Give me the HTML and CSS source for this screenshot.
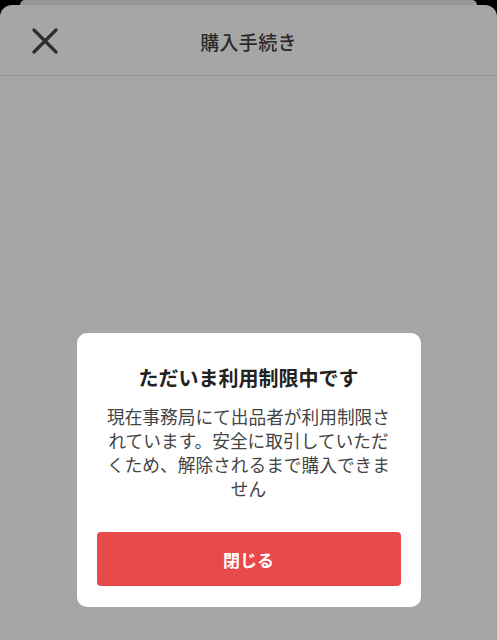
FILE: index.html
```html
<!DOCTYPE html>
<html lang="ja">
<head>
<meta charset="utf-8">
<link rel="stylesheet" href="styles.css">
</head>
<body>
<div class="back"></div>
<div class="sheet">
  <header class="header">
    <button class="close" aria-label="閉じる">
      <svg width="26" height="26" viewBox="0 0 26 26"><path d="M2 2 L24 24 M24 2 L2 24" stroke="#2e2e2e" stroke-width="3.2" stroke-linecap="round" fill="none"/></svg>
    </button>
    <h1 class="title">購入手続き</h1>
  </header>
  <main class="content">
    <div class="modal">
      <h2 class="modal-title">ただいま利用制限中です</h2>
      <p class="modal-text">現在事務局にて出品者が利用制限されています。安全に取引していただくため、解除されるまで購入できません</p>
      <button class="modal-btn">閉じる</button>
    </div>
  </main>
</div>
</body>
</html>
```
FILE: styles.css
```css
html, body {
  margin: 0;
  padding: 0;
  height: 640px;
  overflow: hidden;
  background: #000;
  font-family: "Noto Sans CJK JP", "Noto Sans", sans-serif;
}
.back {
  height: 5px;
  margin: 0 20px;
  background: #979797;
  border-radius: 8px 8px 0 0;
}
.sheet {
  height: 635px;
  background: #a6a6a6;
  border-radius: 12px 12px 0 0;
  display: flex;
  flex-direction: column;
}
.header {
  height: 70px;
  border-bottom: 1px solid #979797;
  display: flex;
  align-items: center;
  justify-content: center;
  position: relative;
}
.close {
  position: absolute;
  left: 32px;
  top: 23px;
  width: 26px;
  height: 26px;
  padding: 0;
  border: 0;
  background: none;
  display: flex;
}
.title {
  margin: 0;
  font-size: 19px;
  font-weight: 500;
  color: #2b2b2b;
  letter-spacing: 0.3px;
  transform: translateY(1px);
}
.content {
  flex: 1;
  display: flex;
  justify-content: center;
  padding-top: 257px;
}
.modal {
  width: 344px;
  height: 274px;
  box-sizing: border-box;
  background: #fff;
  border-radius: 10px;
  display: flex;
  flex-direction: column;
  align-items: center;
  padding: 30px 20px 21px;
}
.modal-title {
  margin: 0;
  font-size: 20px;
  font-weight: 700;
  color: #222;
  line-height: 30px;
}
.modal-text {
  margin: 11px 8px 0;
  font-size: 17.7px;
  line-height: 24px;
  color: #444;
  text-align: center;
}
.modal-btn {
  margin-top: auto;
  width: 304px;
  height: 54px;
  border: 0;
  border-radius: 4px;
  background: #e8494b;
  color: #fff;
  font-family: inherit;
  font-size: 17px;
  font-weight: 700;
  padding: 0;
}
```
